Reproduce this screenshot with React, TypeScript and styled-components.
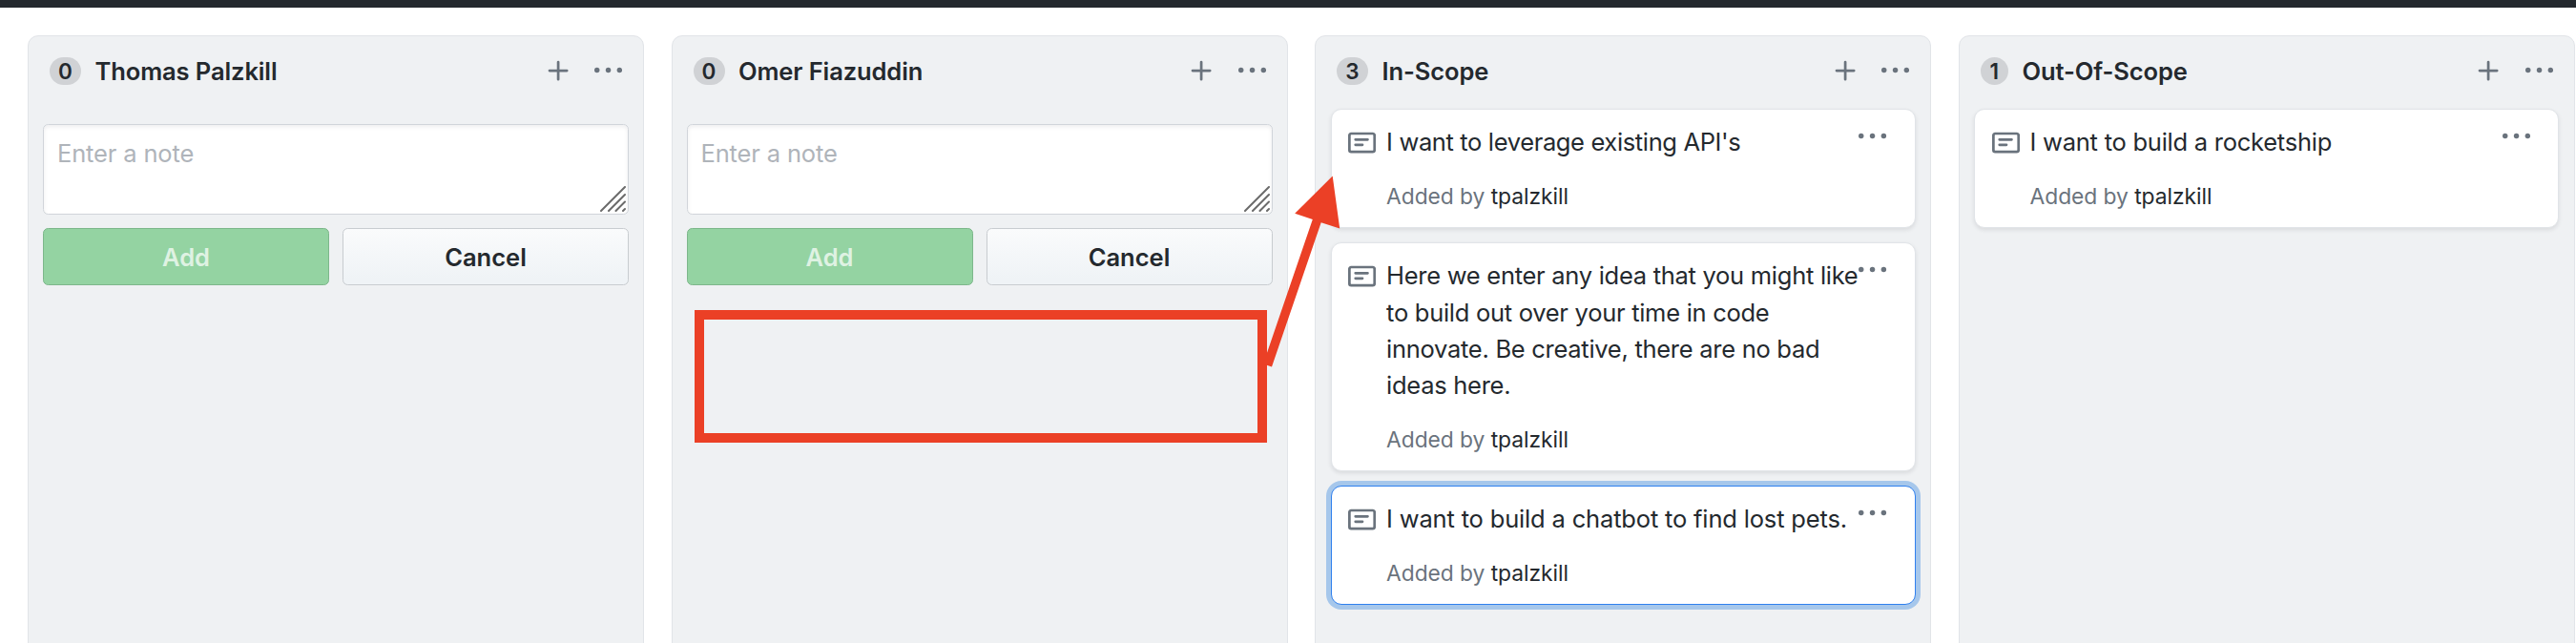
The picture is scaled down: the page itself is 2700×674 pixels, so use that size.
import React from "react";
import styled, { createGlobalStyle, css } from "styled-components";

const GlobalStyle = createGlobalStyle`
  *, *::before, *::after { box-sizing: border-box; }
  html, body { margin: 0; padding: 0; background: #fff; }
  body {
    overflow: hidden;
    font-family: Inter, "Liberation Sans", sans-serif;
    font-size: 25.5px;
    line-height: 38.2px;
    color: #24292e;
  }
`;

const Page = styled.div`
  position: relative;
  display: flex;
  flex-direction: column;
  width: 2700px;
  height: 674px;
  overflow: hidden;
`;

const TopBar = styled.div`
  flex: none;
  height: 8px;
  background: #24292e;
`;

const Board = styled.main`
  flex: 1;
  display: flex;
  gap: 28.5px;
  padding: 29px 0 0 29px;
`;

const ColumnBox = styled.section`
  flex: none;
  width: 646px;
  height: 720px;
  border: 1px solid #e1e4e8;
  border-radius: 11px;
  background: #eff1f3;
`;

const ColumnHeader = styled.header`
  display: flex;
  align-items: center;
  height: 76px;
  padding: 0 21.8px 0 22px;
`;

const Counter = styled.span<{ $width: number }>`
  width: ${(p) => p.$width}px;
  height: 29px;
  margin-top: -3px;
  border-radius: 15px;
  background: #d0d2d5;
  font-size: 22.5px;
  font-weight: 600;
  line-height: 29px;
  text-align: center;
`;

const ColumnTitle = styled.h3`
  flex: 1;
  margin: -2px 0 0 14.5px;
  font-size: 25.5px;
  font-weight: 600;
  letter-spacing: -0.1px;
`;

const IconButton = styled.button<{ $gap?: number; $drop?: number }>`
  display: flex;
  margin: ${(p) => p.$drop ?? 0}px 0 0 ${(p) => p.$gap ?? 0}px;
  padding: 0;
  border: 0;
  background: none;
  color: #6a737d;
`;

const Icon = styled.svg`
  display: block;
  flex: none;
  width: 29.1px;
  height: 29.1px;
  fill: currentColor;
`;

const Form = styled.div`
  padding: 16px 15px 0;
`;

const NoteField = styled.div`
  display: flex;
  justify-content: space-between;
  height: 95px;
  padding: 11px 2px 2px 14px;
  border: 1px solid #d1d5da;
  border-radius: 5.5px;
  background: #fff;
  box-shadow: inset 0 2px 4px rgba(27, 31, 35, 0.075);
  color: #afb4ba;
`;

const Placeholder = styled.span`
  letter-spacing: -0.15px;
`;

const Grip = styled.svg`
  align-self: flex-end;
  width: 27px;
  height: 27px;
  stroke: #6b6b6b;
  stroke-width: 2;
  stroke-linecap: round;
`;

const Actions = styled.div`
  display: flex;
  gap: 14px;
  margin-top: 14px;
`;

const Button = styled.button<{ $primary?: boolean }>`
  flex: 1;
  height: 60px;
  padding: 2px 0 0;
  border: 1px solid #c8ccd0;
  border-radius: 5.5px;
  background: linear-gradient(#fafbfc, #eff3f6 90%);
  color: #24292e;
  font: 600 25.5px/38px Inter, "Liberation Sans", sans-serif;
  ${(p) =>
    p.$primary &&
    css`
      border-color: #7db78b;
      background: #94d3a2;
      color: #dff2e3;
    `}
`;

const CardList = styled.div`
  display: flex;
  flex-direction: column;
  gap: 15.5px;
  padding: 0 15.5px;
`;

const CardBox = styled.article<{ $focused?: boolean }>`
  display: flex;
  align-items: flex-start;
  padding: 15px 29px 16.6px 17.5px;
  border: 1px solid #e1e4e8;
  border-radius: 11px;
  background: #fff;
  box-shadow: 0 2px 4px rgba(27, 31, 35, 0.1);
  ${(p) =>
    p.$focused &&
    css`
      border-color: #2f80ee;
      box-shadow: 0 0 0 5px #a6c7eb;
    `}
`;

const NoteIcon = styled(Icon)`
  margin-top: 5.2px;
  color: #6a737d;
`;

const CardBody = styled.div`
  width: 500px;
  margin: 0 -8px 0 11px;
`;

const CardText = styled.p<{ $tracking: number }>`
  margin: 0 0 22px;
  letter-spacing: ${(p) => p.$tracking}px;
`;

const Byline = styled.p`
  margin: 0;
  font-size: 22.8px;
  line-height: 31px;
  letter-spacing: -0.05px;
  color: #6a737d;
`;

const Author = styled.span`
  color: #24292e;
`;

const MarkBox = styled.div`
  position: absolute;
  left: 728px;
  top: 325px;
  width: 600px;
  height: 139px;
  border: 10px solid #eb4026;
`;

const MarkArrow = styled.svg`
  position: absolute;
  left: 1320px;
  top: 180px;
  width: 90px;
  height: 210px;
  fill: #eb4026;
`;

const PlusIcon = () => (
  <Icon viewBox="0 0 16 16">
    <path d="M7.75 2a.75.75 0 01.75.75V7h4.25a.75.75 0 110 1.5H8.5v4.25a.75.75 0 11-1.5 0V8.5H2.75a.75.75 0 010-1.5H7V2.75A.75.75 0 017.75 2z" />
  </Icon>
);

const DotsIcon = () => (
  <Icon viewBox="0 0 16 16">
    <circle cx="1.5" cy="8" r="1.5" />
    <circle cx="8" cy="8" r="1.5" />
    <circle cx="14.5" cy="8" r="1.5" />
  </Icon>
);

interface Note {
  text: string;
  author: string;
  tracking: number;
  focused?: boolean;
}

interface ColumnData {
  title: string;
  count: number;
  notes?: Note[];
}

const columns: ColumnData[] = [
  { title: "Thomas Palzkill", count: 0 },
  { title: "Omer Fiazuddin", count: 0 },
  {
    title: "In-Scope",
    count: 3,
    notes: [
      { text: "I want to leverage existing API's", author: "tpalzkill", tracking: -0.36 },
      {
        text: "Here we enter any idea that you might like to build out over your time in code innovate. Be creative, there are no bad ideas here.",
        author: "tpalzkill",
        tracking: -0.28,
      },
      {
        text: "I want to build a chatbot to find lost pets.",
        author: "tpalzkill",
        tracking: -0.17,
        focused: true,
      },
    ],
  },
  {
    title: "Out-Of-Scope",
    count: 1,
    notes: [{ text: "I want to build a rocketship", author: "tpalzkill", tracking: -0.25 }],
  },
];

const NoteForm = () => (
  <Form>
    <NoteField>
      <Placeholder>Enter a note</Placeholder>
      <Grip viewBox="0 0 27 27">
        <path d="M1 26L26 1M9 26L26 9M16.5 26L26 16.5M24 26L26 24" />
      </Grip>
    </NoteField>
    <Actions>
      <Button $primary>Add</Button>
      <Button>Cancel</Button>
    </Actions>
  </Form>
);

const Card = ({ text, author, tracking, focused }: Note) => (
  <CardBox $focused={focused}>
    <NoteIcon viewBox="0 0 16 16">
      <path
        fillRule="evenodd"
        d="M0 3.75C0 2.784.784 2 1.75 2h12.5c.966 0 1.75.784 1.75 1.75v8.5A1.75 1.75 0 0114.25 14H1.75A1.75 1.75 0 010 12.25v-8.5zm1.75-.25a.25.25 0 00-.25.25v8.5c0 .138.112.25.25.25h12.5a.25.25 0 00.25-.25v-8.5a.25.25 0 00-.25-.25H1.75zM3.5 6.25a.75.75 0 01.75-.75h7a.75.75 0 010 1.5h-7a.75.75 0 01-.75-.75zm.75 2.25a.75.75 0 000 1.5h4a.75.75 0 000-1.5h-4z"
      />
    </NoteIcon>
    <CardBody>
      <CardText $tracking={tracking}>{text}</CardText>
      <Byline>
        Added by <Author>{author}</Author>
      </Byline>
    </CardBody>
    <IconButton $gap={4.3} $drop={-2}>
      <DotsIcon />
    </IconButton>
  </CardBox>
);

const Column = ({ title, count, notes }: ColumnData) => (
  <ColumnBox>
    <ColumnHeader>
      <Counter $width={count === 1 ? 29.5 : 33}>{count}</Counter>
      <ColumnTitle>{title}</ColumnTitle>
      <IconButton $drop={-2}>
        <PlusIcon />
      </IconButton>
      <IconButton $gap={23.5} $drop={-4.6}>
        <DotsIcon />
      </IconButton>
    </ColumnHeader>
    {notes ? (
      <CardList>
        {notes.map((n) => (
          <Card key={n.text} {...n} />
        ))}
      </CardList>
    ) : (
      <NoteForm />
    )}
  </ColumnBox>
);

export default function App() {
  return (
    <>
      <GlobalStyle />
      <Page>
        <TopBar />
        <Board>
          {columns.map((c) => (
            <Column key={c.title} {...c} />
          ))}
        </Board>
        <MarkBox />
        <MarkArrow viewBox="0 0 90 210">
          <path d="M76.7 4.5L84.2 59.5L64.7 53.2L13 204.5L4 201.5L55.8 50L37.2 43.7Z" />
        </MarkArrow>
      </Page>
    </>
  );
}
